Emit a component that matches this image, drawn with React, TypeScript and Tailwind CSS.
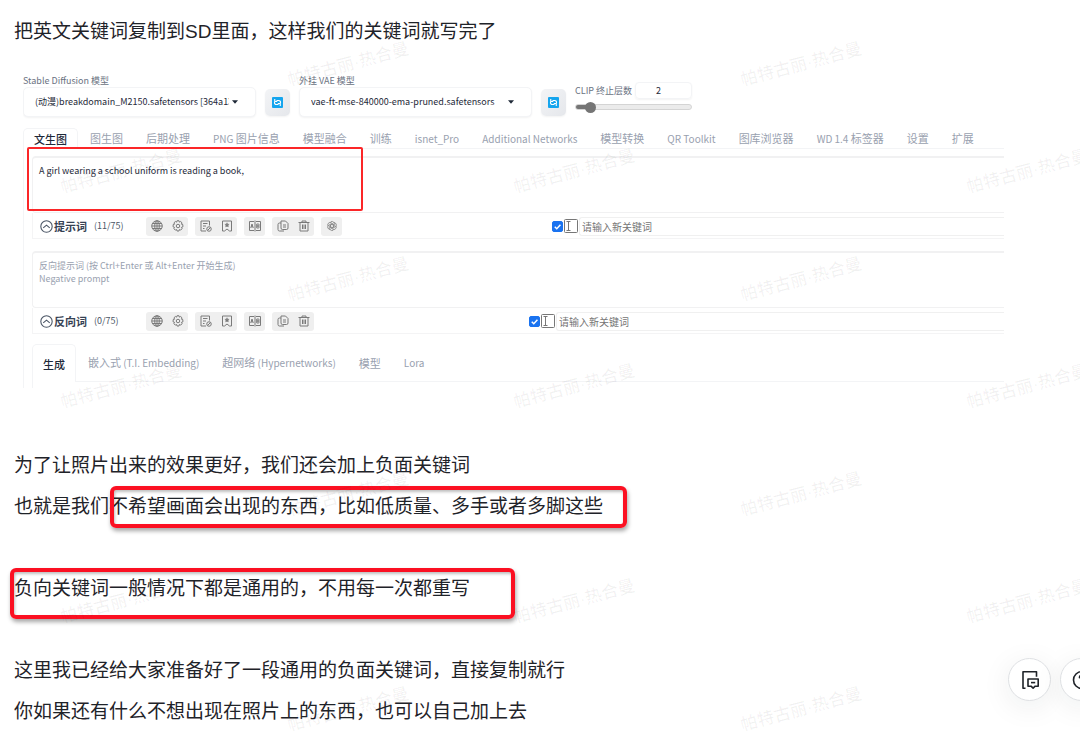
import { useState } from "react";
import type { ReactNode } from "react";

const mainTabs = [
  "文生图",
  "图生图",
  "后期处理",
  "PNG 图片信息",
  "模型融合",
  "训练",
  "isnet_Pro",
  "Additional Networks",
  "模型转换",
  "QR Toolkit",
  "图库浏览器",
  "WD 1.4 标签器",
  "设置",
  "扩展",
];

const subTabs = ["生成", "嵌入式 (T.I. Embedding)", "超网络 (Hypernetworks)", "模型", "Lora"];

function Icon({ children }: { children: ReactNode }) {
  return (
    <svg viewBox="0 0 24 24" className="size-3" fill="none" stroke="currentColor" strokeWidth="2">
      {children}
    </svg>
  );
}

function GlobeIcon() {
  return (
    <Icon>
      <circle cx="12" cy="12" r="10.5" />
      <ellipse cx="12" cy="12" rx="4.5" ry="10.5" />
      <path d="M12 1.5v21M1.5 12h21M3.5 7h17M3.5 17h17" />
    </Icon>
  );
}

function GearIcon() {
  return (
    <Icon>
      <path d="M10 1.5h4l.8 2.8 2.6-1.3 2.8 2.8-1.4 2.6 2.9.9v4.6l-2.9.9 1.4 2.6-2.8 2.8-2.6-1.2-.8 3h-4l-.8-3-2.6 1.2-2.8-2.8 1.4-2.6-2.9-.9V9.3l2.9-.9-1.4-2.6L6.6 3l2.6 1.3z" />
      <circle cx="12" cy="12" r="3.5" />
    </Icon>
  );
}

function HistoryIcon() {
  return (
    <Icon>
      <path d="M12 22H2V2h17v9M6 7h9M6 12h6M6 17h3" />
      <circle cx="18" cy="18" r="4.5" />
      <path d="M15 21l6-6" />
    </Icon>
  );
}

function BookmarkIcon() {
  return (
    <Icon>
      <path d="M3 2h18v20h-4l-5-4-5 4H3z" />
      <path d="M12 5.5l1.3 2.8 3 .4-2.2 2.1.5 3-2.6-1.5-2.6 1.5.5-3-2.2-2.1 3-.4z" fill="currentColor" strokeWidth="1" />
    </Icon>
  );
}

function TranslateIcon() {
  return (
    <Icon>
      <path d="M10 3H1v18h9M14 3h9v18h-9M12 1v22" />
      <path d="M3.5 16l2.5-8 2.5 8M4.5 13.5h3M15.5 8v8h3a2 2 0 000-4h-3 3a2 2 0 000-4z" />
    </Icon>
  );
}

function CopyIcon() {
  return (
    <Icon>
      <path d="M8 2h9l5 5v9a3 3 0 01-3 3h-8a3 3 0 01-3-3z" />
      <path d="M8 6H5a3 3 0 00-3 3v10a3 3 0 003 3h9M12 10h6M12 14h6" />
    </Icon>
  );
}

function TrashIcon() {
  return (
    <Icon>
      <path d="M1 5h22M8 5V2h8v3M4 5v17h16V5M9 9v9M12 9v9M15 9v9" />
    </Icon>
  );
}

function KnotIcon() {
  const petals = [0, 60, 120, 180, 240, 300];

  return (
    <Icon>
      {petals.map((deg) => (
        <path key={deg} d="M8 5.5a4.500 4.500 0 018.500 1v6l-4.500 3" transform={`rotate(${deg} 12 12)`} strokeWidth="1.500" />
      ))}
    </Icon>
  );
}

function CollapseIcon() {
  return (
    <svg viewBox="0 0 24 24" className="size-[13px] text-gray-600" fill="none" stroke="currentColor" strokeWidth="2">
      <circle cx="12" cy="12" r="10.5" />
      <path d="M6 14.500l6-5 6 5" />
    </svg>
  );
}

// latin runs are set one size smaller than the chinese around them
function TabLabel({ text }: { text: string }) {
  return text.split(/([\x20-\x7e]+)/).map((part, i) =>
    i % 2 === 1 ? (
      <span key={i} className="text-[10px]">
        {part}
      </span>
    ) : (
      part
    )
  );
}

function TabBar({ tabs, className }: { tabs: string[]; className: string }) {
  const [active, setActive] = useState(0);

  return (
    <nav className={`flex gap-px border-b border-gray-100 text-[11px] whitespace-nowrap text-gray-400 ${className}`}>
      {tabs.map((tab, i) => (
        <button
          key={tab}
          type="button"
          onClick={() => setActive(i)}
          className={
            i === active
              ? "-mb-px shrink-0 rounded-t-[5px] border border-b-0 border-gray-100 bg-white px-[10px] font-medium text-gray-800"
              : "shrink-0 px-[11px]"
          }
        >
          <TabLabel text={tab} />
        </button>
      ))}
    </nav>
  );
}

function ToolGroup({ children }: { children: ReactNode }) {
  return <div className="flex h-[19px] items-center rounded-[3px] bg-[#efefef] text-[#7a7a7a]">{children}</div>;
}

function ToolButton({ label, children }: { label: string; children: ReactNode }) {
  return (
    <button type="button" aria-label={label} className="flex h-full w-[21px] items-center justify-center">
      {children}
    </button>
  );
}

function PromptToolbar(props: { title: string; count: string; inputClass: string; withKnot?: boolean }) {
  const [auto, setAuto] = useState(true);

  return (
    <div className="flex h-[26px] items-center border-b border-l border-[#f4f4f5] pt-px">
      <div className="flex w-[113px] shrink-0 items-center pl-[7px]">
        <CollapseIcon />
        <span className="ml-px text-[11px] font-bold text-gray-700">{props.title}</span>
        <span className="ml-[7px] text-[9px] text-gray-600">({props.count})</span>
      </div>
      <div className="flex shrink-0 gap-[7px]">
        <ToolGroup>
          <ToolButton label="语言"><GlobeIcon /></ToolButton>
          <ToolButton label="设置"><GearIcon /></ToolButton>
        </ToolGroup>
        <ToolGroup>
          <ToolButton label="历史"><HistoryIcon /></ToolButton>
          <ToolButton label="收藏"><BookmarkIcon /></ToolButton>
        </ToolGroup>
        <ToolGroup>
          <ToolButton label="翻译"><TranslateIcon /></ToolButton>
        </ToolGroup>
        <ToolGroup>
          <ToolButton label="复制"><CopyIcon /></ToolButton>
          <ToolButton label="删除"><TrashIcon /></ToolButton>
        </ToolGroup>
        {props.withKnot && (
          <ToolGroup>
            <ToolButton label="生成"><KnotIcon /></ToolButton>
          </ToolGroup>
        )}
      </div>
      <div className={`flex min-w-0 flex-1 items-center ${props.inputClass}`}>
        <label className="relative flex size-[11px] shrink-0">
          <input
            type="checkbox"
            aria-label={`${props.title}自动输入`}
            checked={auto}
            onChange={(e) => setAuto(e.target.checked)}
            className="size-[11px] appearance-none rounded-[2px] border border-gray-400 checked:border-[#1a73f0] checked:bg-[#1a73f0]"
          />
          {auto && (
            <svg viewBox="0 0 12 12" className="pointer-events-none absolute inset-0" fill="none" stroke="#fff" strokeWidth="1.6">
              <path d="M3 6.200l2.200 2.200L9.200 4" />
            </svg>
          )}
        </label>
        <svg viewBox="0 0 14 14" className="ml-px size-[14px] shrink-0 text-[#777]" fill="none" stroke="currentColor">
          <rect x=".5" y=".5" width="13" height="13" rx="1" />
          <path d="M2.500 2.500h4M2.500 11.500h4M4.500 2.500v9" />
        </svg>
        <input
          type="text"
          aria-label={`${props.title}新关键词`}
          placeholder="请输入新关键词"
          className="ml-px h-[19px] min-w-0 flex-1 rounded-l-[3px] border border-r-0 border-[#f0f0f0] pl-[2px] text-[10px] outline-none placeholder:text-[#757575]"
        />
      </div>
    </div>
  );
}

function ModelSelect({ id, label, value }: { id: string; label: string; value: string }) {
  return (
    <div className="w-[233px] shrink-0">
      <label htmlFor={id} className="block text-[9px] leading-[13px] text-gray-500">
        {label}
      </label>
      <div className="relative flex">
        <select
          id={id}
          className="h-[30px] w-full appearance-none rounded-[5px] border border-gray-100 bg-white pr-[26px] pl-[11px] text-[9px] text-gray-800 shadow-xs outline-none"
        >
          <option>{value}</option>
        </select>
        <svg viewBox="0 0 6 4" className="pointer-events-none absolute top-[13px] right-[18px] h-1 w-1.5" fill="#1f2937">
          <path d="M0 .3h6L3 3.700z" />
        </svg>
      </div>
    </div>
  );
}

function RefreshButton() {
  return (
    <button
      type="button"
      aria-label="刷新"
      className="mx-[9px] mb-px flex h-[27px] w-[25px] shrink-0 items-center justify-center rounded-[5px] bg-linear-to-br from-gray-100 to-gray-200 shadow-xs"
    >
      <svg viewBox="0 0 22 22" className="size-[11px]">
        <rect width="22" height="22" rx="2" fill="#15a5ee" />
        <g fill="none" stroke="#fff" strokeWidth="2.200">
          <path d="M17 12v-1.500a3.500 3.500 0 00-3.500-3.500H9M5 10v1.500A3.500 3.500 0 008.500 15H13" />
          <path d="M5.500 4v5h5M16.500 18v-5h-5" />
        </g>
      </svg>
    </button>
  );
}

function WebuiPanel() {
  const [clip, setClip] = useState(2);

  return (
    <section className="mr-[76px] ml-[23px] h-[393px] overflow-hidden pt-[22px] font-['Noto_Sans_CJK_SC',sans-serif] leading-4">
      <div className="flex items-end">
        <ModelSelect id="sd-model" label="Stable Diffusion 模型" value="(动漫)breakdomain_M2150.safetensors [364a13d5f1]" />
        <RefreshButton />
        <ModelSelect id="vae-model" label="外挂 VAE 模型" value="vae-ft-mse-840000-ema-pruned.safetensors" />
        <RefreshButton />
        <div className="w-[117px] shrink-0 pb-[7px]">
          <div className="flex items-center">
            <label htmlFor="clip" className="w-[60px] text-[9px] whitespace-nowrap text-gray-500">
              CLIP 终止层数
            </label>
            <input
              type="text"
              aria-label="CLIP"
              value={clip}
              onChange={(e) => setClip(Number(e.target.value) || 1)}
              className="h-[17px] w-[57px] rounded-[4px] border border-gray-100 pr-[10px] text-center text-[9px] text-gray-800 shadow-xs outline-none"
            />
          </div>
          <input
            id="clip"
            type="range"
            min={1}
            max={12}
            value={clip}
            onChange={(e) => setClip(Number(e.target.value))}
            className="mt-[5px] block h-[6px] w-full appearance-none rounded-full border border-[#d4d4d4] bg-linear-to-r from-[#757575] from-12% to-[#ebebeb] to-12% [&::-webkit-slider-thumb]:size-[11px] [&::-webkit-slider-thumb]:appearance-none [&::-webkit-slider-thumb]:rounded-full [&::-webkit-slider-thumb]:bg-[#757575]"
          />
        </div>
      </div>

      <TabBar tabs={mainTabs} className="mt-[11px] h-[21px]" />

      <div className="border-l border-gray-100 pt-[7px] pl-2">
        <div className="relative">
          <textarea
            aria-label="提示词"
            defaultValue="A girl wearing a school uniform is reading a book,"
            className="block h-[57px] w-full resize-none rounded-l-[4px] border border-t-2 border-r-0 border-[#f1f1f2] pt-[6px] pl-[6px] text-[9px] leading-[13px] text-gray-800 outline-none"
          />
          <span className="pointer-events-none absolute -top-[9px] -left-[5px] h-[64px] w-[336px] rounded-[2px] border-2 border-[#fb2628]" />
        </div>
        <PromptToolbar title="提示词" count="11/75" inputClass="ml-[210px]" withKnot />
        <textarea
          aria-label="反向提示词"
          placeholder={"反向提示词 (按 Ctrl+Enter 或 Alt+Enter 开始生成)\nNegative prompt"}
          className="mt-3 block h-[57px] w-full resize-none rounded-l-[4px] border border-t-2 border-r-0 border-[#f1f1f2] pt-[6px] pl-[6px] text-[9px] leading-[13px] outline-none placeholder:text-gray-400"
        />
        <PromptToolbar title="反向词" count="0/75" inputClass="ml-[215px]" />

        <TabBar tabs={subTabs} className="mt-[10px] h-[38px]" />
        <div className="h-[6px] border-l border-gray-100" />
      </div>
    </section>
  );
}

function WatermarkLayer({ className }: { className: string }) {
  return (
    <div className={`absolute grid grid-cols-[repeat(3,453px)] auto-rows-[215px] place-items-center ${className}`}>
      {Array.from({ length: 12 }, (_, i) => (
        <span key={i} className="-rotate-15 text-[17px] font-medium whitespace-nowrap text-[#1f2329]/6">
          帕特古丽·热合曼
        </span>
      ))}
    </div>
  );
}

function Mark({ className }: { className: string }) {
  return (
    <span
      className={`pointer-events-none absolute top-0 rounded-[6px] border-4 border-[#fb1022] shadow-[1px_3px_4px_rgba(0,0,0,0.35),inset_1px_2px_3px_rgba(0,0,0,0.25)] ${className}`}
    />
  );
}

export default function App() {
  return (
    <main className="relative min-h-screen overflow-hidden bg-white pt-[11px] pb-2 font-['Liberation_Sans','Noto_Sans_CJK_SC',sans-serif] text-[19px] leading-[41px] text-[#1f2329]">
      <p className="px-[14px]">把英文关键词复制到SD里面，这样我们的关键词就写完了</p>

      <WebuiPanel />

      <div className="px-[14px]">
        <p>为了让照片出来的效果更好，我们还会加上负面关键词</p>
        <p className="relative">
          也就是我们不希望画面会出现的东西，比如低质量、多手或者多脚这些
          <Mark className="left-[96px] h-[42px] w-[517px]" />
        </p>
        <p className="relative mt-[41px]">
          负向关键词一般情况下都是通用的，不用每一次都重写
          <Mark className="-left-1 h-[51px] w-[505px]" />
        </p>
        <p className="mt-[41px]">这里我已经给大家准备好了一段通用的负面关键词，直接复制就行</p>
        <p>你如果还有什么不想出现在照片上的东西，也可以自己加上去</p>
      </div>

      <div className="pointer-events-none absolute inset-0 overflow-hidden">
        <WatermarkLayer className="-top-[43px] left-[122px]" />
        <WatermarkLayer className="top-[64px] -left-[105px]" />
      </div>

      <div className="fixed -right-[23px] bottom-[39px] flex gap-[9px]">
        <button
          type="button"
          aria-label="评论"
          className="flex size-[43px] items-center justify-center rounded-full border border-[#dee0e3] bg-white shadow-[0_6px_30px_rgba(31,35,41,0.08)]"
        >
          <svg viewBox="0 0 20 20" className="size-5" fill="none" stroke="currentColor" strokeWidth="1.600" strokeLinejoin="round">
            <path d="M5.500 18.200H3V1.800h13.500v5" />
            <path d="M8 9h10.200v7.200h-3l-2.100 2-2.100-2H8z" />
            <path d="M11 12.600h4.200" />
          </svg>
        </button>
        <button
          type="button"
          aria-label="帮助"
          className="flex size-[43px] items-center justify-center rounded-full border border-[#dee0e3] bg-white shadow-[0_6px_30px_rgba(31,35,41,0.08)]"
        >
          <svg viewBox="0 0 20 20" className="size-5" fill="none" stroke="currentColor" strokeWidth="1.600" strokeLinecap="round">
            <circle cx="10" cy="10" r="8.500" />
            <path d="M7.500 7.800a2.500 2.500 0 115 0c0 1.700-2.500 2-2.500 3.700M10 14.200v.2" />
          </svg>
        </button>
      </div>
    </main>
  );
}
